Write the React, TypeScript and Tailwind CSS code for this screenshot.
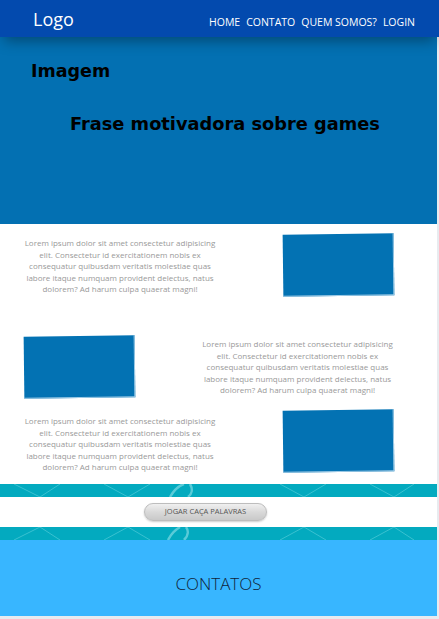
const lorem =
  "Lorem ipsum dolor sit amet consectetur adipisicing elit. Consectetur id exercitationem nobis ex consequatur quibusdam veritatis molestiae quas labore itaque numquam provident delectus, natus dolorem? Ad harum culpa quaerat magni!";

const Texto = () => (
  <p className="w-[196px] text-center text-[8px] leading-[11.5px] text-[#999] [font-family:'Open_Sans',sans-serif]">
    {lorem}
  </p>
);

const Caixa = () => (
  <div className="w-[111px] h-[62px] bg-[#0372b3] border-r border-b border-[#9fcbe6] -rotate-[0.7deg]" />
);

const Padrao = () => (
  <svg className="absolute inset-0 w-full h-full" viewBox="0 0 437 56" preserveAspectRatio="none">
    <g stroke="#5fd0dc" strokeWidth="1" fill="none" opacity="0.6">
      <path d="M14 0 L40 13 M60 0 L40 13 M104 0 L128 13 M150 0 L128 13 M280 0 L304 13 M326 0 L304 13 M370 0 L394 13 M414 0 L394 13" />
      <path d="M14 56 L40 43 M60 56 L40 43 M104 56 L128 43 M150 56 L128 43 M280 56 L304 43 M326 56 L304 43 M370 56 L394 43 M414 56 L394 43" />
    </g>
    <path d="M170 13 C174 6 178 2 184 0 M190 0 C193 5 192 10 188 13 M168 56 C171 50 175 46 180 43 M186 43 C189 47 188 52 184 56" stroke="#7fd8e2" strokeWidth="2.5" fill="none" opacity="0.7" />
  </svg>
);

export default function App() {
  return (
    <div className="min-h-[619px] bg-[#e8ebef] [font-family:'Open_Sans',sans-serif]">
      {/* topo */}
      <header className="relative z-10 h-[37px] bg-[#034aae] flex items-center justify-between pl-[33px] pr-[24px] shadow-[0_8px_14px_-4px_rgba(0,0,0,0.35)]">
        <span className="text-white text-[18px] leading-none">Logo</span>
        <nav className="flex gap-[6px] text-white text-[10.5px] pt-[8px]">
          <a>HOME</a>
          <a>CONTATO</a>
          <a>QUEM SOMOS?</a>
          <a>LOGIN</a>
        </nav>
      </header>

      <div className="w-[437px]">
        {/* hero */}
        <section className="h-[187px] bg-[#0370b2] pt-[22px] [font-family:'DejaVu_Sans',sans-serif] font-bold text-black">
          <h2 className="pl-[31px] text-[17.5px] leading-[24px]">Imagem</h2>
          <h1 className="pl-[70px] mt-[29px] text-[17.8px] leading-[24px]">Frase motivadora sobre games</h1>
        </section>

        {/* conteudo */}
        <section className="bg-white pt-[10px] pb-[12px]">
          <div className="flex items-center h-[62px]">
            <div className="w-[240px] flex justify-center pt-[2px]"><Texto /></div>
            <div className="flex-1 flex justify-center"><Caixa /></div>
          </div>
          <div className="flex items-center h-[62px] mt-[40px]">
            <div className="w-[158px] flex justify-center"><Caixa /></div>
            <div className="flex-1 flex justify-center"><Texto /></div>
          </div>
          <div className="flex items-center h-[62px] mt-[12px]">
            <div className="w-[240px] flex justify-center pt-[6px]"><Texto /></div>
            <div className="flex-1 flex justify-center"><Caixa /></div>
          </div>
        </section>

        {/* faixa do jogo */}
        <section className="relative h-[56px] bg-[#03aabf] pt-[13px]">
          <Padrao />
          <div className="relative h-[30px] bg-white flex items-center justify-center pr-[26px]">
            <button className="w-[123px] h-[18px] rounded-full border border-[#bdbdbd] bg-gradient-to-b from-[#f0f0f0] via-[#d9d9d9] to-[#c9c9c9] text-[7.5px] text-[#555] shadow-[0_1px_2px_rgba(0,0,0,0.2)]">
              JOGAR CAÇA PALAVRAS
            </button>
          </div>
        </section>

        {/* contatos */}
        <footer className="h-[76px] bg-[#38b6ff] flex items-center justify-center pt-[12px]">
          <span className="text-[17px] font-light text-[#10243a]">CONTATOS</span>
        </footer>
      </div>
    </div>
  );
}
